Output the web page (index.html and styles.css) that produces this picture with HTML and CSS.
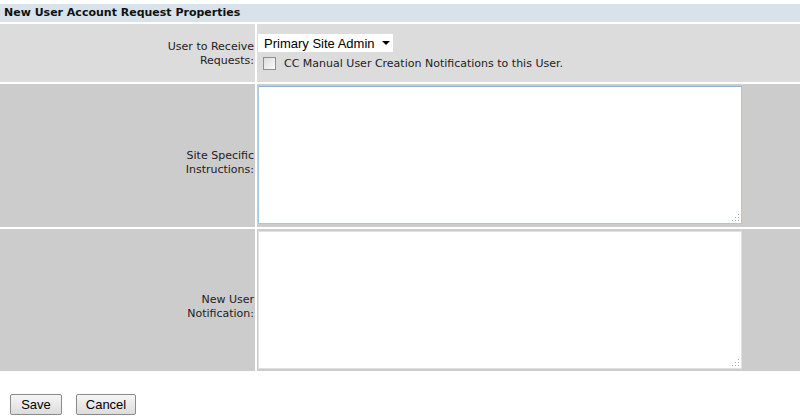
FILE: index.html
```html
<!DOCTYPE html>
<html>
<head>
<meta charset="utf-8">
<link rel="stylesheet" href="styles.css">
</head>
<body>
<div class="props">
  <div class="head">New User Account Request Properties</div>
  <div class="row row-light">
    <div class="label">User to Receive<br>Requests:</div>
    <div class="field">
      <div class="select">Primary Site Admin <span class="caret"></span></div>
      <label class="cc"><span class="box"></span>CC Manual User Creation Notifications to this User.</label>
    </div>
  </div>
  <div class="row row-dark tall">
    <div class="label">Site Specific<br>Instructions:</div>
    <div class="field"><div class="textarea"><span class="grip"></span></div></div>
  </div>
  <div class="row row-dark tall">
    <div class="label">New User<br>Notification:</div>
    <div class="field"><div class="textarea"><span class="grip"></span></div></div>
  </div>
</div>
<div class="actions">
  <button class="btn save">Save</button>
  <button class="btn cancel">Cancel</button>
</div>
</body>
</html>
```
FILE: styles.css
```css
html, body { margin: 0; padding: 0; background: #fff; }
body { font-family: "DejaVu Sans", Verdana, sans-serif; font-size: 11px; color: #222; }
.props { display: flex; flex-direction: column; gap: 2px; padding-top: 4px; }
.head { height: 18px; line-height: 18px; background: #d8e2ea; font-weight: bold; padding-left: 4px; color: #111; font-size: 11px; }
.row { display: grid; grid-template-columns: 255px 1fr; column-gap: 2px; }
.row-light .label, .row-light .field { background: #dcdcdc; }
.row-dark .label, .row-dark .field { background: #cccccc; }
.row-light { height: 58px; }
.row.tall { height: 143px; }
.row.tall + .row.tall { height: 142px; }
.label { display: flex; align-items: center; justify-content: flex-end; text-align: right; line-height: 14px; padding-right: 1px; color: #222; }
.row-light .label { padding-top: 2px; }
.row.tall .label { padding-top: 14px; }
.field { padding: 2px 0 0 1px; }
.row-light .field { padding: 10px 0 0 1px; }
.select { display: inline-flex; align-items: center; height: 18px; width: 135px; box-sizing: border-box; background: #fff; font-family: "Liberation Sans", Arial, sans-serif; font-size: 13px; color: #000; padding-left: 6px; gap: 7px; }
.caret { width: 0; height: 0; border-left: 4px solid transparent; border-right: 4px solid transparent; border-top: 4px solid #000; }
.cc { display: flex; align-items: center; margin-top: 5px; padding-left: 5px; color: #222; }
.box { width: 11px; height: 11px; border: 1px solid #8f8f8f; background: linear-gradient(135deg, #dcdcdc, #fafafa); margin-right: 8px; box-sizing: content-box; }
.textarea { position: relative; width: 484px; height: 138px; box-sizing: border-box; background: #fff; border: 1px solid #aac6d8; border-top-color: #8fb0c8; }
.row.tall + .row.tall .textarea { border-color: #e0e0e0; }
.grip { position: absolute; right: 2px; bottom: 2px; width: 8px; height: 8px; background: radial-gradient(circle, #aaa 0.8px, transparent 1px) 0 0 / 3px 3px; clip-path: polygon(100% 0, 100% 100%, 0 100%); }
.actions { display: flex; gap: 14px; padding: 23px 0 0 10px; }
.btn { font-family: "Liberation Sans", Arial, sans-serif; font-size: 13px; color: #000; height: 21px; border: 1px solid #8a8a8a; border-radius: 2px; background: linear-gradient(#f6f6f6, #dcdcdc); padding: 0; }
.save { width: 52px; }
.cancel { width: 60px; }
```
